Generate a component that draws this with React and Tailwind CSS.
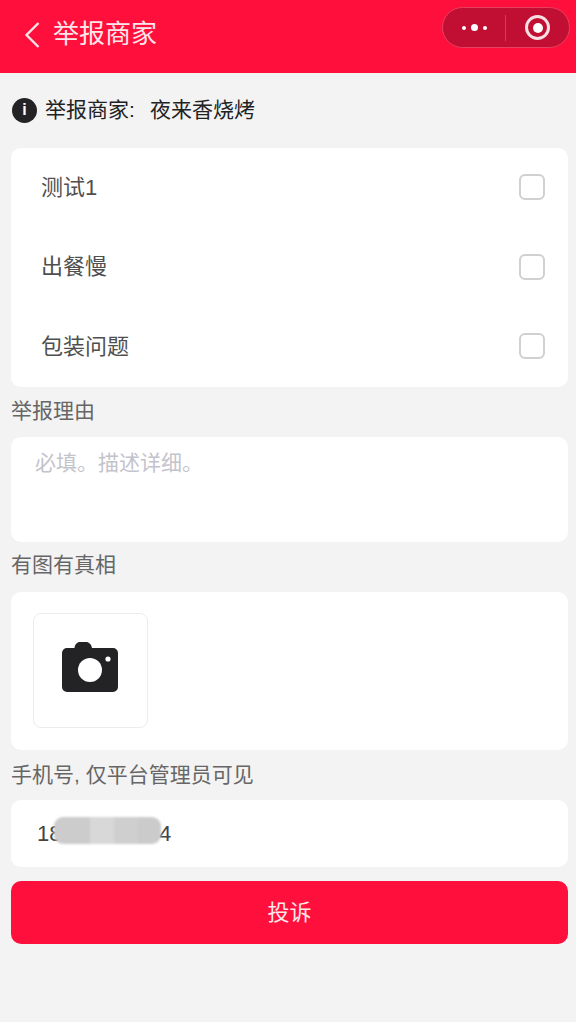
const FONT = "font-['Liberation_Sans','Noto_Sans_CJK_SC',sans-serif]";

const reasons = ['测试1', '出餐慢', '包装问题'];

function CameraIcon() {
  return (
    <svg width="56" height="50" viewBox="0 0 56 50" fill="none">
      <path
        d="M5 6h7.500c.4-3.500 2.500-6 5.500-6h6c3 0 5.500 2.500 6 6H51a5 5 0 0 1 5 5v34a5 5 0 0 1-5 5H5a5 5 0 0 1-5-5V11a5 5 0 0 1 5-5z"
        fill="#232325"
      />
      <circle cx="28" cy="28" r="12" fill="#fff" />
      <circle cx="46" cy="17" r="2.600" fill="#fff" />
    </svg>
  );
}

function ReasonRow({ label }) {
  return (
    <div className="flex h-[79.5px] items-center justify-between pb-[1px] pl-[30px] pr-[23px]">
      <span className="text-[22px] text-[#4f4f4f]">{label}</span>
      <span className="h-[26px] w-[26px] rounded-[6px] border-2 border-[#d0d0d0] bg-white" />
    </div>
  );
}

function FieldLabel({ children, className }) {
  return <div className={`text-[21px] leading-6 text-[#666666] ${className}`}>{children}</div>;
}

export default function App() {
  return (
    <div className={`${FONT} h-[1022px] w-[576px] overflow-hidden bg-[#f3f3f3]`}>
      {/* Header */}
      <div className="flex h-[73px] items-center justify-between bg-[#ff0f3c] pl-[24px] pr-[6px]">
        <div className="flex items-center gap-[13px] pb-[4px]">
          <svg width="16" height="28" viewBox="0 0 16 28" fill="none">
            <path d="M14.500 2 2.500 14l12 12" stroke="#fbe3e7" strokeWidth="2.400" />
          </svg>
          <span className="text-[26px] text-[#fde6ea]">举报商家</span>
        </div>
        <div className="mb-[18px] flex h-[41px] w-[128px] items-center rounded-full border border-[#e8405f] bg-[#c00f33]">
          <div className="flex flex-1 items-center justify-center gap-[5px]">
            <span className="h-[4px] w-[4px] rounded-full bg-white" />
            <span className="h-[7px] w-[7px] rounded-full bg-white" />
            <span className="h-[4px] w-[4px] rounded-full bg-white" />
          </div>
          <div className="h-[26px] w-px bg-[#d83a58]" />
          <div className="flex w-[63px] items-center justify-center">
            <span className="flex h-[25px] w-[25px] items-center justify-center rounded-full border-[3px] border-[#f7dfe4]">
              <span className="h-[10px] w-[10px] rounded-full bg-white" />
            </span>
          </div>
        </div>
      </div>

      <div className="pl-[11px] pr-[8px]">
        {/* Merchant */}
        <div className="flex h-[75px] items-center gap-[8px] pb-[1px] pl-[1px]">
          <span className="flex h-[25px] w-[25px] items-center justify-center rounded-full bg-[#232325] text-[16px] font-bold leading-none text-white">
            i
          </span>
          <span className="w-[97px] whitespace-nowrap text-[21px] text-[#222222]">举报商家:</span>
          <span className="text-[21px] text-[#222222]">夜来香烧烤</span>
        </div>

        {/* Reasons */}
        <div className="rounded-[10px] bg-white">
          {reasons.map((r) => (
            <ReasonRow key={r} label={r} />
          ))}
        </div>

        <FieldLabel className="mt-[12px]">举报理由</FieldLabel>
        <div className="mt-[14px] h-[105px] rounded-[10px] bg-white px-[24px] py-[12px] text-[21px] leading-7 text-[#c3c3cc]">
          必填。描述详细。
        </div>

        <FieldLabel className="mt-[11px]">有图有真相</FieldLabel>
        <div className="mt-[15px] h-[158px] rounded-[10px] bg-white pl-[22px] pt-[21px]">
          <div className="flex h-[115px] w-[115px] items-center justify-center rounded-[8px] border border-[#ececec] pb-[6px] pr-[2px]">
            <CameraIcon />
          </div>
        </div>

        <FieldLabel className="mt-[13px]">手机号, 仅平台管理员可见</FieldLabel>
        <div className="relative mt-[13px] flex h-[67px] items-center rounded-[10px] bg-white pl-[26px] text-[22px] text-[#444444]">
          <span>18</span>
          <span className="absolute left-[148px]">4</span>
          {/* blurred-out phone digits */}
          <div className="absolute left-[43px] top-[17px] flex h-[27px] w-[107px] overflow-hidden rounded-[9px] blur-[1px]">
            <div className="w-[36px] bg-[#cccccc]" />
            <div className="w-[24px] bg-[#d8d8d8]" />
            <div className="w-[24px] bg-[#cfcfcf]" />
            <div className="w-[23px] bg-[#cbcbcb]" />
          </div>
        </div>

        <button className="mt-[14px] h-[63px] w-full rounded-[10px] bg-[#ff0f3c] text-[22px] text-[#fde6ea]">
          投诉
        </button>
      </div>
    </div>
  );
}
